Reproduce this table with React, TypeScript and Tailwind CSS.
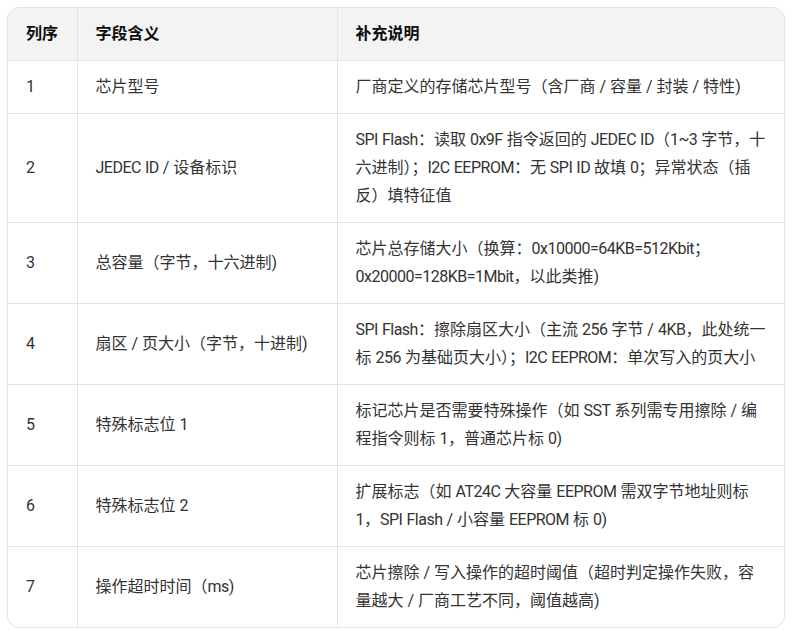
const rows: [string, string, string][] = [
  ['1', '芯片型号', '厂商定义的存储芯片型号（含厂商 / 容量 / 封装 / 特性)'],
  ['2', 'JEDEC ID / 设备标识', 'SPI Flash：读取 0x9F 指令返回的 JEDEC ID（1~3 字节，十六进制）；I2C EEPROM：无 SPI ID 故填 0；异常状态（插反）填特征值'],
  ['3', '总容量（字节，十六进制)', '芯片总存储大小（换算：0x10000=64KB=512Kbit；0x20000=128KB=1Mbit，以此类推)'],
  ['4', '扇区 / 页大小（字节，十进制)', 'SPI Flash：擦除扇区大小（主流 256 字节 / 4KB，此处统一标 256 为基础页大小）；I2C EEPROM：单次写入的页大小'],
  ['5', '特殊标志位 1', '标记芯片是否需要特殊操作（如 SST 系列需专用擦除 / 编程指令则标 1，普通芯片标 0)'],
  ['6', '特殊标志位 2', '扩展标志（如 AT24C 大容量 EEPROM 需双字节地址则标 1，SPI Flash / 小容量 EEPROM 标 0)'],
  ['7', '操作超时时间（ms)', '芯片擦除 / 写入操作的超时阈值（超时判定操作失败，容量越大 / 厂商工艺不同，阈值越高)'],
]

// latin runs are a touch narrower in the original, tighten them
function Txt({ s }: { s: string }) {
  const parts = s.split(/([A-Za-z0-9~=()]+)/)
  return (
    <>
      {parts.map((p, i) =>
        i % 2 === 1 ? (
          <span key={i} className="tracking-[-0.5px]">{p}</span>
        ) : (
          p
        )
      )}
    </>
  )
}

export default function App() {
  return (
    <div className="bg-white p-[7px] font-['Roboto','Noto_Sans_CJK_SC',sans-serif]">
      <div className="w-[778px] overflow-hidden rounded-xl border border-[#e3e3e3]">
        <table className="w-full table-fixed border-collapse text-[16px] leading-[28px] text-[#333]">
          <colgroup>
            <col className="w-[69px]" />
            <col className="w-[260px]" />
            <col />
          </colgroup>
          <thead>
            <tr className="bg-[#f3f3f3] text-left text-[#0d0d0d]">
              <th className="border-r border-b border-[#e3e3e3] px-[18px] py-3 font-bold">列序</th>
              <th className="border-r border-b border-[#e3e3e3] px-[18px] py-3 font-bold">字段含义</th>
              <th className="border-b border-[#e3e3e3] px-[18px] py-3 font-bold">补充说明</th>
            </tr>
          </thead>
          <tbody>
            {rows.map((r, i) => {
              const last = i === rows.length - 1
              const b = last ? '' : 'border-b'
              return (
                <tr key={r[0]}>
                  <td className={`${b} border-r border-[#e3e3e3] px-[18px] py-3 align-middle`}>{r[0]}</td>
                  <td className={`${b} border-r border-[#e3e3e3] px-[18px] py-3 align-middle`}>
                    <Txt s={r[1]} />
                  </td>
                  <td className={`${b} border-[#e3e3e3] px-[18px] py-3 align-middle`}>
                    <Txt s={r[2]} />
                  </td>
                </tr>
              )
            })}
          </tbody>
        </table>
      </div>
    </div>
  )
}
